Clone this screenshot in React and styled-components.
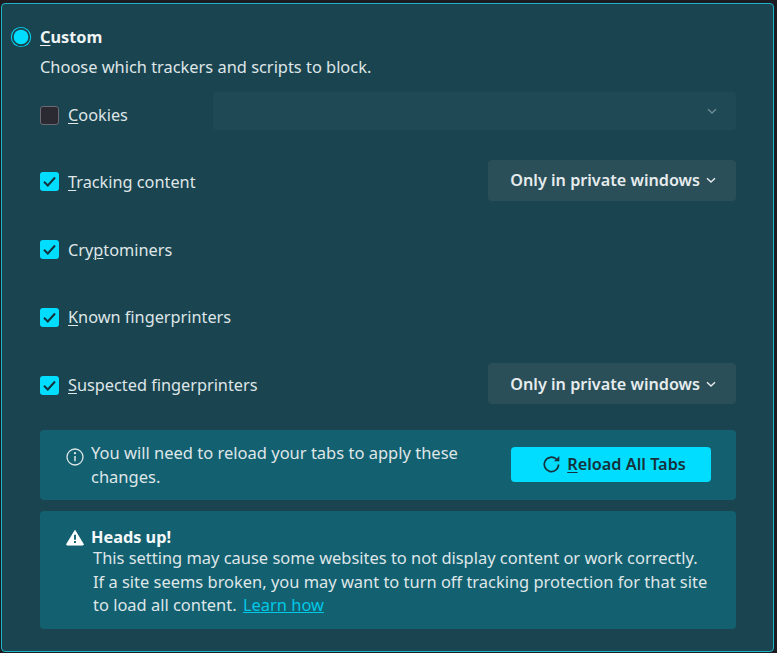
import React from "react";
import styled, { createGlobalStyle } from "styled-components";

const Global = createGlobalStyle`
  html, body {
    margin: 0;
    padding: 0;
    background: #1c1b22;
  }
  body {
    font-family: "Noto Sans", "Open Sans", sans-serif;
  }
`;

const Page = styled.div`
  width: 777px;
  height: 653px;
  padding: 3px 3px 1px 1px;
  box-sizing: border-box;
  overflow: hidden;
`;

const Panel = styled.div`
  height: 100%;
  box-sizing: border-box;
  border: 1px solid #1fb3c6;
  border-radius: 4px;
  background: #1a444f;
  padding: 23px 37px 0 9px;
  color: #dfe6e8;
  font-size: 16.3px;
`;

const Head = styled.div`
  display: flex;
  align-items: center;
  gap: 9px;
  height: 20px;
`;

const Radio = styled.span`
  width: 20px;
  height: 20px;
  box-sizing: border-box;
  border-radius: 50%;
  border: 2px solid #1a444f;
  background: #00ddff;
  box-shadow: 0 0 0 1px #00ddff;
  transform: scale(0.92);
`;

const Title = styled.span`
  font-weight: 700;
  color: #eef3f4;
`;

const Key = styled.span`
  text-decoration: underline;
  text-underline-offset: 2px;
  text-decoration-thickness: 1px;
`;

const Body = styled.div`
  margin-left: 29px;
`;

const Desc = styled.div`
  margin-top: 8px;
  font-size: 16.4px;
  line-height: 24px;
`;

const Rows = styled.div`
  display: flex;
  flex-direction: column;
  gap: 26.75px;
  margin-top: 13px;
`;

const Row = styled.div`
  display: flex;
  justify-content: space-between;
  align-items: flex-start;
  height: 41px;
`;

const Check = styled.label`
  display: flex;
  align-items: center;
  gap: 9px;
  height: 20px;
  margin-top: ${(props) => (props.$first ? "13px" : "12px")};
  white-space: nowrap;
`;

const Box = styled.span`
  display: flex;
  align-items: center;
  justify-content: center;
  width: 19px;
  height: 19px;
  box-sizing: border-box;
  border-radius: 3px;
  background: ${(props) => (props.checked ? "#00ddff" : "#2b2a33")};
  border: ${(props) => (props.checked ? "none" : "1px solid #6b6a72")};
`;

const Select = styled.div`
  display: flex;
  align-items: center;
  justify-content: flex-end;
  gap: 5px;
  width: ${(props) => (props.disabled ? "523px" : "248px")};
  height: ${(props) => (props.disabled ? "38px" : "41px")};
  box-sizing: border-box;
  padding-right: ${(props) => (props.disabled ? "18px" : "19px")};
  border-radius: 4px;
  background: ${(props) => (props.disabled ? "#1f4a55" : "#2b4f58")};
  color: ${(props) => (props.disabled ? "#6d8a92" : "#e6ecee")};
  font-size: 16.2px;
  font-weight: 600;
`;

const Notice = styled.div`
  display: flex;
  align-items: center;
  justify-content: space-between;
  height: 70px;
  box-sizing: border-box;
  padding: 0 25px 0 26px;
  margin-top: 26px;
  border-radius: 4px;
  background: #136070;
`;

const NoticeText = styled.div`
  display: flex;
  gap: 7px;
  width: 410px;
  font-size: 16.5px;
  line-height: 24px;
`;

const InfoIcon = styled.svg`
  flex: none;
  margin-top: 7px;
`;

const ReloadButton = styled.button`
  display: flex;
  align-items: center;
  justify-content: center;
  gap: 6px;
  width: 200px;
  height: 35px;
  margin-top: -2px;
  padding: 0 0 0 6px;
  border: none;
  border-radius: 4px;
  background: #00ddff;
  color: #15323c;
  font: 600 16.3px "Noto Sans", "Open Sans", sans-serif;
`;

const Warning = styled.div`
  height: 118px;
  box-sizing: border-box;
  margin-top: 11px;
  padding: 18px 26px 0;
  border-radius: 4px;
  background: #136070;
  font-size: 16.44px;
  line-height: 23.5px;
`;

const WarningTitle = styled.div`
  display: flex;
  align-items: center;
  gap: 7px;
  height: 17px;
  font-size: 16.3px;
  line-height: 17px;
  font-weight: 700;
  color: #f5f8f9;
`;

const WarningText = styled.div`
  margin-left: 27px;
  white-space: nowrap;
`;

const Link = styled.a`
  margin-left: 2px;
  color: #00c8e6;
  text-decoration: underline;
`;

const Chevron = () => (
  <svg width="12" height="12" viewBox="0 0 12 12" fill="none" stroke="currentColor" strokeWidth="1.4">
    <path d="M2 4.2 6 8l4-3.8" />
  </svg>
);

const Tick = () => (
  <svg width="15" height="15" viewBox="0 0 15 15" fill="none" stroke="#15323c" strokeWidth="2">
    <path d="M2 7.8 5.8 11.5 13 3.5" />
  </svg>
);

const rows = [
  { key: "T", rest: "racking content", checked: true, select: true },
  { pre: "Cry", key: "p", rest: "tominers", checked: true },
  { key: "K", rest: "nown fingerprinters", checked: true },
  { key: "S", rest: "uspected fingerprinters", checked: true, select: true },
];

const PrivateSelect = () => (
  <Select>
    Only in private windows
    <Chevron />
  </Select>
);

const App = () => (
  <Page>
    <Global />
    <Panel>
      <Head>
        <Radio />
        <Title>
          <Key>C</Key>ustom
        </Title>
      </Head>
      <Body>
        <Desc>Choose which trackers and scripts to block.</Desc>
        <Rows>
          <Row>
            <Check $first>
              <Box />
              <span>
                <Key>C</Key>ookies
              </span>
            </Check>
            <Select disabled>
              <Chevron />
            </Select>
          </Row>
          {rows.map((row) => (
            <Row key={row.rest}>
              <Check>
                <Box checked={row.checked}>
                  <Tick />
                </Box>
                <span>
                  {row.pre}
                  <Key>{row.key}</Key>
                  {row.rest}
                </span>
              </Check>
              {row.select && <PrivateSelect />}
            </Row>
          ))}
        </Rows>
        <Notice>
          <NoticeText>
            <InfoIcon width="18" height="18" viewBox="0 0 18 18" fill="none" stroke="#dfe6e8" strokeWidth="1.3">
              <circle cx="9" cy="9" r="8" />
              <path d="M9 8v5.2" strokeWidth="1.5" />
              <circle cx="9" cy="5.2" r="0.5" fill="#dfe6e8" />
            </InfoIcon>
            <span>You will need to reload your tabs to apply these changes.</span>
          </NoticeText>
          <ReloadButton>
            <svg width="19" height="19" viewBox="0 0 18 18" fill="none" stroke="#15323c" strokeWidth="1.6">
              <path d="M15.7 9A6.8 6.8 0 1 1 13.6 4" />
              <path d="M16.4 1v5h-5z" fill="#15323c" stroke="none" />
            </svg>
            <span>
              <Key>R</Key>eload All Tabs
            </span>
          </ReloadButton>
        </Notice>
        <Warning>
          <WarningTitle>
            <svg width="18" height="17" viewBox="0 0 19 17">
              <path d="M9.5 1 18.3 15.5a.6.6 0 0 1-.5 1H1.2a.6.6 0 0 1-.5-1z" fill="#ffffff" stroke="#ffffff" strokeLinejoin="round" />
              <path d="M8.5 5.5h2v5.5h-2zM8.5 12.3h2v2h-2z" fill="#136070" />
            </svg>
            Heads up!
          </WarningTitle>
          <WarningText>
            This setting may cause some websites to not display content or work correctly.
            <br />
            If a site seems broken, you may want to turn off tracking protection for that site
            <br />
            to load all content. <Link>Learn how</Link>
          </WarningText>
        </Warning>
      </Body>
    </Panel>
  </Page>
);

export default App;
